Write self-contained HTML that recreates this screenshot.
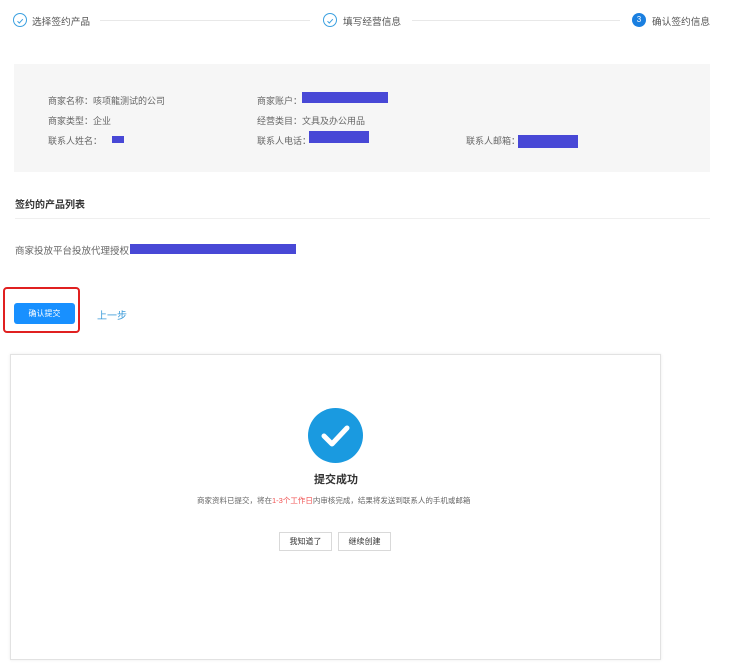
<!DOCTYPE html>
<html><head><meta charset="utf-8"><style>
*{margin:0;padding:0;box-sizing:border-box}
body{width:736px;height:665px;background:#fff;font-family:"Liberation Sans","Noto Sans CJK SC",sans-serif;color:#555;position:relative;overflow:hidden}
.a{position:absolute;white-space:nowrap}
.ic{position:absolute;width:14px;height:14px;border:1px solid #3ba0e0;border-radius:50%}
.ln{position:absolute;height:1px;background:#e8e8e8}
.m{position:absolute;background:#4848d6}
.t{font-size:9px;color:#666}
.btn{position:absolute;border:1px solid #d9d9d9;background:#fff;font-size:8px;color:#333;text-align:center;line-height:17px}
</style></head><body>
<div class="ic" style="left:13px;top:13px"><svg width="12" height="12" viewBox="0 0 12 12"><path d="M3.5 6.2l1.8 1.8 3.5-3.8" stroke="#3ba0e0" fill="none" stroke-width="1"/></svg></div>
<div class="a" style="left:32px;top:14px;font-size:9.7px;color:#555">选择签约产品</div>
<div class="ln" style="left:100px;top:20px;width:210px"></div>
<div class="ic" style="left:323px;top:13px"><svg width="12" height="12" viewBox="0 0 12 12"><path d="M3.5 6.2l1.8 1.8 3.5-3.8" stroke="#3ba0e0" fill="none" stroke-width="1"/></svg></div>
<div class="a" style="left:343px;top:14px;font-size:9.7px;color:#555">填写经营信息</div>
<div class="ln" style="left:412px;top:20px;width:208px"></div>
<div class="a" style="left:632px;top:13px;width:14px;height:14px;border-radius:50%;background:#1a7fe0;color:#fff;font-size:8px;text-align:center;line-height:14px">3</div>
<div class="a" style="left:652px;top:14px;font-size:9.7px;color:#555">确认签约信息</div>

<div class="a" style="left:14px;top:64px;width:696px;height:108px;background:#f6f6f6"></div>
<div class="a t" style="left:48px;top:94px">商家名称：咳项龍测试的公司</div>
<div class="a t" style="left:257px;top:94px">商家账户：</div>
<div class="m" style="left:302px;top:92px;width:86px;height:11px"></div>
<div class="a t" style="left:48px;top:114px">商家类型：企业</div>
<div class="a t" style="left:257px;top:114px">经营类目：文具及办公用品</div>
<div class="a t" style="left:48px;top:134px">联系人姓名：</div>
<div class="m" style="left:112px;top:136px;width:12px;height:7px"></div>
<div class="a t" style="left:257px;top:134px">联系人电话：</div>
<div class="m" style="left:309px;top:131px;width:60px;height:12px"></div>
<div class="a t" style="left:466px;top:134px">联系人邮箱：</div>
<div class="m" style="left:518px;top:135px;width:60px;height:13px"></div>

<div class="a" style="left:15px;top:196px;font-size:10px;font-weight:bold;color:#333">签约的产品列表</div>
<div class="ln" style="left:15px;top:218px;width:695px;background:#efefef"></div>
<div class="a" style="left:15px;top:243px;font-size:9.5px;color:#666">商家投放平台投放代理授权</div>
<div class="m" style="left:130px;top:244px;width:166px;height:10px"></div>

<div class="a" style="left:3px;top:287px;width:77px;height:46px;border:2px solid #e02020;border-radius:4px"></div>
<div class="a" style="left:14px;top:303px;width:61px;height:21px;background:#1890ff;border-radius:3px;color:#fff;font-size:8px;text-align:center;line-height:21px">确认提交</div>
<div class="a" style="left:97px;top:307px;font-size:10px;color:#3a9ad9">上一步</div>

<div class="a" style="left:10px;top:354px;width:651px;height:306px;border:1px solid #e2e2e2;box-shadow:0 0 3px rgba(0,0,0,.08)"></div>
<div class="a" style="left:308px;top:408px;width:55px;height:55px;border-radius:50%;background:#1a9ae0"><svg width="55" height="55" viewBox="0 0 55 55"><path d="M16 28l8 8 15-16" stroke="#fff" stroke-width="5" fill="none" stroke-linecap="round" stroke-linejoin="round"/></svg></div>
<div class="a" style="left:314px;top:471px;font-size:11px;font-weight:bold;color:#333">提交成功</div>
<div class="a" style="left:197px;top:495px;font-size:7.5px;color:#666">商家资料已提交，将在<span style="color:#f05050">1-3个工作日</span>内审核完成，结果将发送到联系人的手机或邮箱</div>
<div class="btn" style="left:279px;top:532px;width:53px;height:19px">我知道了</div>
<div class="btn" style="left:338px;top:532px;width:53px;height:19px">继续创建</div>
</body></html>
